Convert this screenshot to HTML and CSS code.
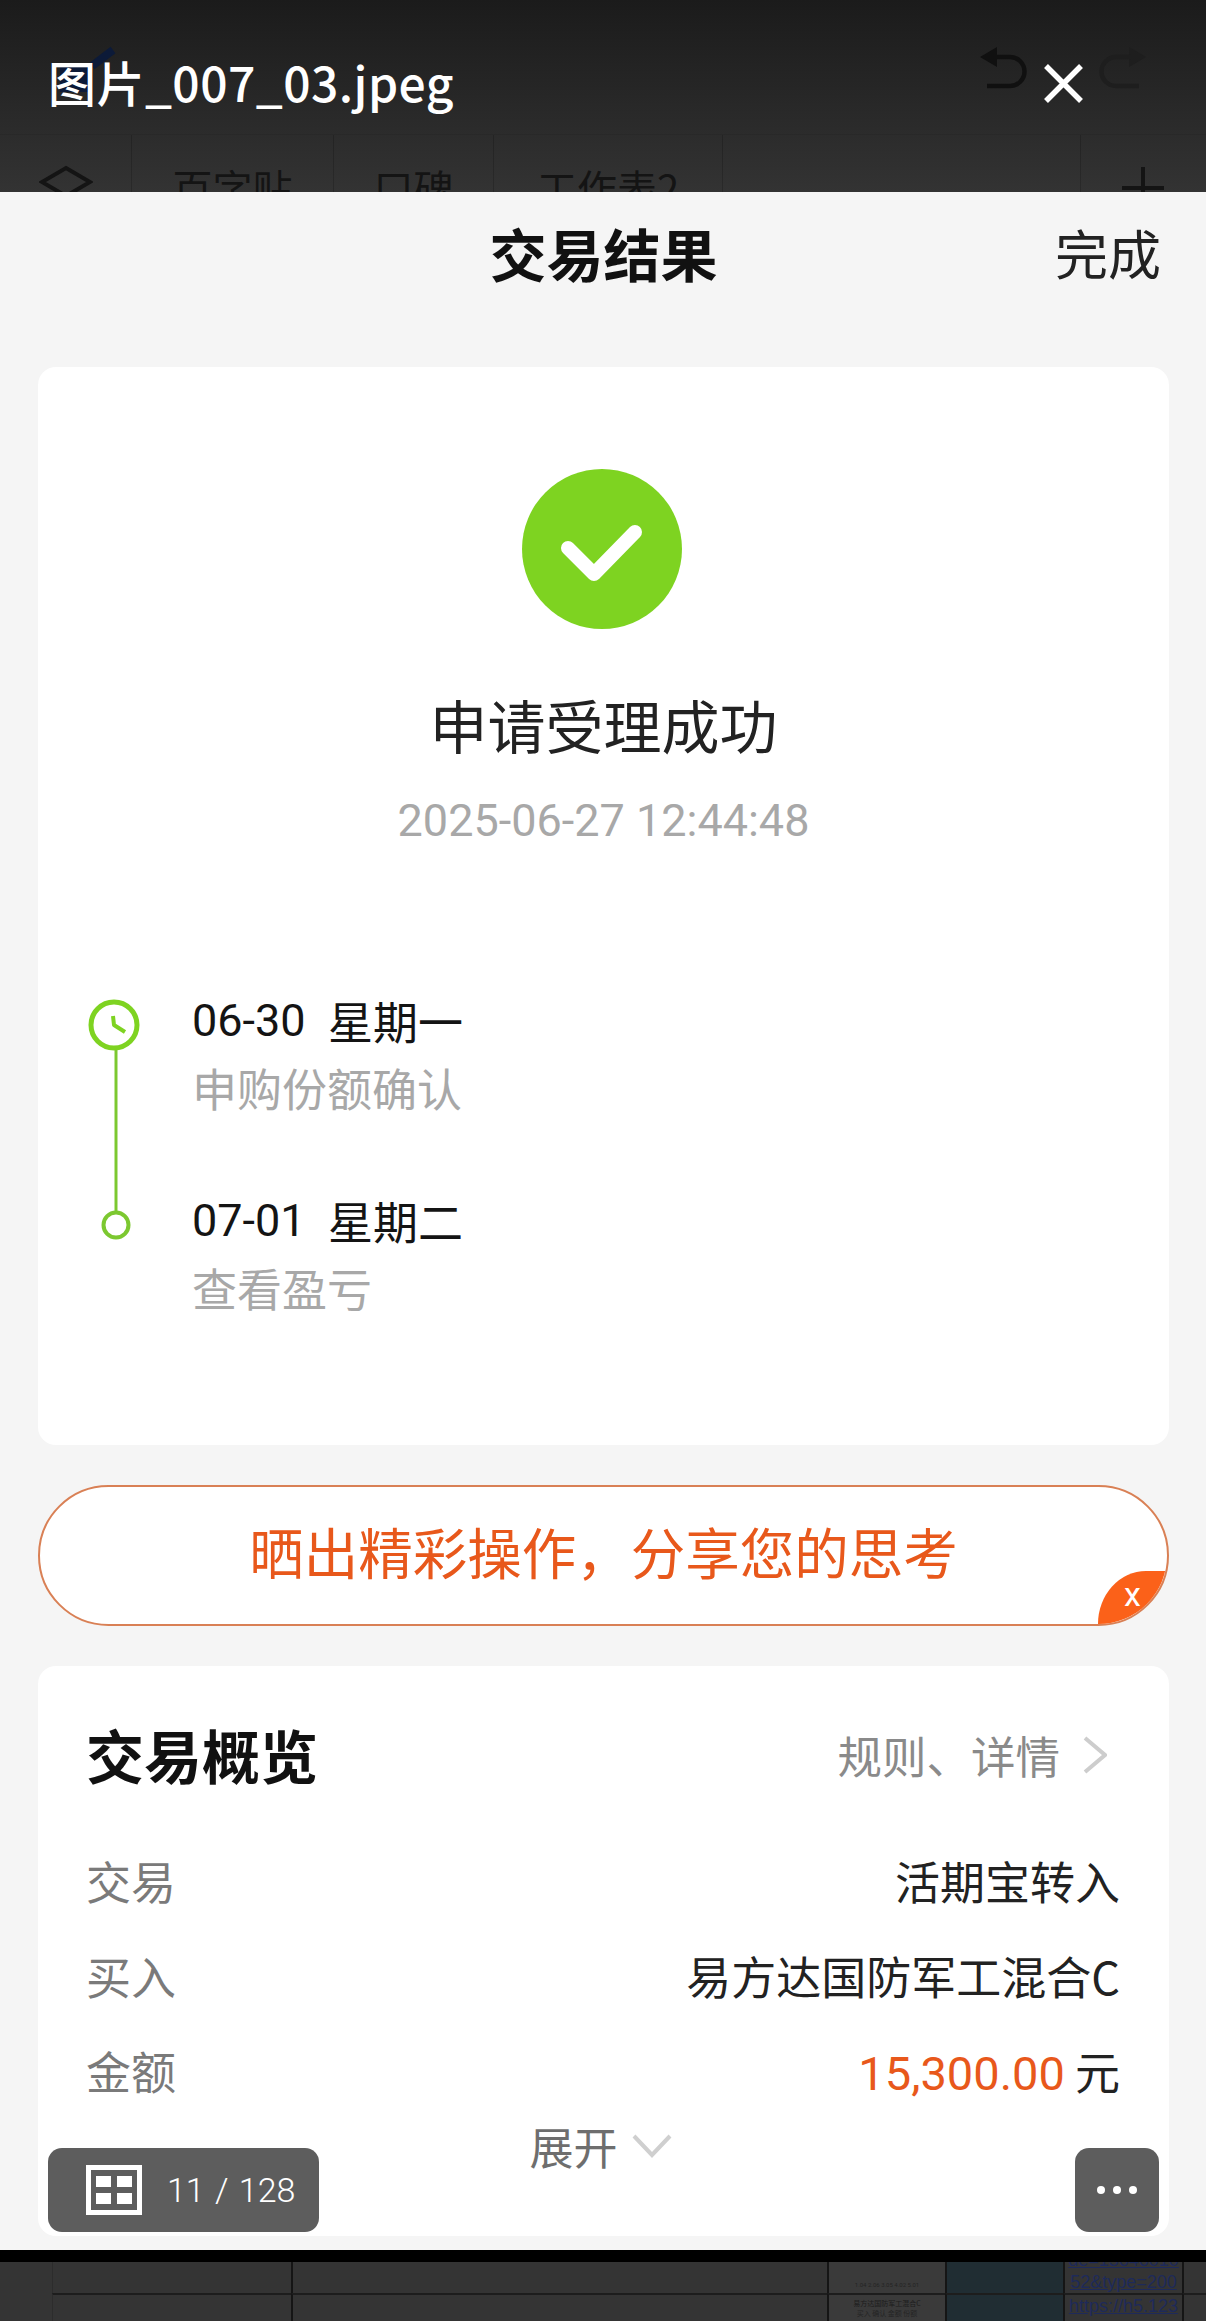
FILE: index.html
```html
<!DOCTYPE html>
<html lang="zh-CN">
<head>
<meta charset="utf-8">
<title>图片_007_03.jpeg</title>
<link rel="stylesheet" href="styles.css">
</head>
<body>
<div class="page">
  <header class="viewer-top">
    <svg class="stray-mark" width="120" height="70" viewBox="0 0 120 70"><path d="M56 36H88V62H56Z" fill="#0c1a38"/><path d="M88 36L109 20" stroke="#0c1a38" stroke-width="8" fill="none"/></svg>
    <div class="title-row">
      <h1 class="file-name">图片_007_03.jpeg</h1>
      <div class="tools">
        <svg class="tool-arrow" width="50" height="45" viewBox="0 0 50 45"><path d="M0 12L17 2V22Z" fill="#101010"/><path d="M15 12H30A14.5 14.5 0 0 1 30 41H7" fill="none" stroke="#101010" stroke-width="4.5"/></svg>
        <svg class="tool-close" width="39" height="39" viewBox="0 0 39 39"><path d="M2 2L37 37M37 2L2 37" stroke="#fff" stroke-width="5.5" fill="none"/></svg>
        <svg class="tool-arrow" width="50" height="45" viewBox="0 0 50 45"><g transform="matrix(-1 0 0 1 49 0)"><path d="M0 12L17 2V22Z" fill="#1e1e1e"/><path d="M15 12H30A14.5 14.5 0 0 1 30 41H7" fill="none" stroke="#1e1e1e" stroke-width="4.5"/></g></svg>
      </div>
    </div>
    <div class="tabs">
      <div class="tab tab-layers"><svg width="54" height="30" viewBox="0 0 54 30"><path d="M27 3L51 17L27 31L3 17Z" fill="none" stroke="#141414" stroke-width="4"/></svg></div>
      <div class="tab tab-a">百字贴</div>
      <div class="tab tab-b">口碑</div>
      <div class="tab tab-c">工作表2</div>
      <div class="tab tab-d"></div>
      <div class="tab tab-plus"><svg width="44" height="26" viewBox="0 0 44 26"><path d="M21 0V26M0 21H42" stroke="#141414" stroke-width="4" fill="none"/></svg></div>
    </div>
  </header>

  <main class="sheet">
    <nav class="nav">
      <span></span>
      <h2 class="nav-title">交易结果</h2>
      <span class="nav-done">完成</span>
    </nav>

    <section class="card result">
      <svg class="check" width="160" height="160" viewBox="0 0 160 160"><circle cx="80" cy="80" r="80" fill="#7ed321"/><path d="M46 79L72 105L113 63" fill="none" stroke="#fff" stroke-width="14" stroke-linecap="round" stroke-linejoin="round"/></svg>
      <div class="result-title">申请受理成功</div>
      <div class="result-time">2025-06-27 12:44:48</div>
      <div class="timeline">
        <svg class="timeline-art" width="60" height="262" viewBox="0 0 60 262">
          <circle cx="34" cy="34" r="23" fill="none" stroke="#7ed321" stroke-width="5"/>
          <path d="M33 25L34 34L45 41" fill="none" stroke="#7ed321" stroke-width="4" stroke-linejoin="round"/>
          <path d="M36 59V220" stroke="#7cc830" stroke-width="3" fill="none"/>
          <circle cx="36" cy="234" r="12.5" fill="#fff" stroke="#7cc830" stroke-width="4"/>
        </svg>
        <div class="steps">
          <div class="step">
            <div class="step-date"><span class="date-num">06-30</span><span class="date-week">星期一</span></div>
            <div class="step-note">申购份额确认</div>
          </div>
          <div class="step">
            <div class="step-date"><span class="date-num">07-01</span><span class="date-week">星期二</span></div>
            <div class="step-note">查看盈亏</div>
          </div>
        </div>
      </div>
    </section>

    <section class="banner">
      <span class="banner-text">晒出精彩操作，分享您的思考</span>
      <span class="banner-close">x</span>
    </section>

    <section class="card overview">
      <div class="overview-head">
        <h3 class="overview-title">交易概览</h3>
        <div class="overview-link">规则、详情<svg class="chev-right" width="24" height="38" viewBox="0 0 24 38"><path d="M2 2L22 19L2 36" fill="none" stroke="#cdcdcd" stroke-width="4"/></svg></div>
      </div>
      <div class="row"><span class="row-label">交易</span><span class="row-value">活期宝转入</span></div>
      <div class="row"><span class="row-label">买入</span><span class="row-value">易方达国防军工混合C</span></div>
      <div class="row"><span class="row-label">金额</span><span class="row-value"><span class="amount">15,300.00</span> 元</span></div>
      <div class="expand">展开<svg class="chev-down" width="40" height="24" viewBox="0 0 40 24"><path d="M2 2L20 21L38 2" fill="none" stroke="#cfcfcf" stroke-width="4"/></svg></div>
    </section>
  </main>

  <div class="black-bar"></div>

  <div class="sheet-table">
    <div class="cell c-edge"></div>
    <div class="cell c-wide"></div>
    <div class="cell c-mid"></div>
    <div class="cell c-thumb"><span class="thumb-foot">1.04 2.06 3.05 4.02 5.01</span></div>
    <div class="cell c-blue"></div>
    <div class="cell c-link"><span class="link">de=13646010</span><span class="link">52&amp;type=200</span></div>
    <div class="cell c-end"></div>
    <div class="cell c-edge"></div>
    <div class="cell c-wide line-top"></div>
    <div class="cell c-mid line-top"></div>
    <div class="cell c-thumb line-top"><span class="thumb-head">易方达国防军工混合C</span><span class="thumb-row">买入 确认 金额 份额</span><span class="thumb-row">1101 1300 1500 1200</span></div>
    <div class="cell c-blue line-top"></div>
    <div class="cell c-link line-top"><span class="link">https://h5.123</span></div>
    <div class="cell c-end line-top"></div>
  </div>

  <div class="float-pager">
    <svg width="56" height="50" viewBox="0 0 56 50"><rect x="2.5" y="2.5" width="51" height="45" fill="none" stroke="#fff" stroke-width="5"/><path d="M10 11H25V22H10ZM31 11H46V22H31ZM10 28H25V39H10ZM31 28H46V39H31Z" fill="#fff"/></svg>
    <span class="pager-text">11 / 128</span>
  </div>
  <div class="float-more"><span class="dot"></span><span class="dot"></span><span class="dot"></span></div>
</div>
</body>
</html>
```

FILE: styles.css
```css
* { box-sizing: border-box; }
html, body { margin: 0; padding: 0; }
body {
  width: 1206px;
  height: 2321px;
  overflow: hidden;
  font-family: "Noto Sans CJK SC", "Roboto", sans-serif;
  background: #333;
}
h1, h2, h3 { margin: 0; font-weight: inherit; font-size: inherit; }
.page { position: relative; width: 1206px; height: 2321px; overflow: hidden; display: flex; flex-direction: column; }

.viewer-top {
  position: relative;
  height: 192px;
  flex: none;
  overflow: hidden;
  background: linear-gradient(#1b1b1b, #333);
}
.stray-mark { position: absolute; left: 4px; top: 30px; }
.title-row { position: relative; height: 134px; display: flex; align-items: flex-start; justify-content: space-between; padding: 45px 59px 0 48px; }
.file-name { font-family: "Noto Sans CJK SC", sans-serif; font-size: 48px; letter-spacing: 0.45px; line-height: 74px; margin-top: -1px; font-weight: 500; color: #fff; white-space: nowrap; }
.tools { display: flex; align-items: flex-start; gap: 14px; }
.tool-close { margin-top: 19px; }

.tabs { display: flex; height: 58px; border-top: 1px solid rgba(0,0,0,.06); }
.tab { flex: none; height: 100%; border-right: 1px solid rgba(0,0,0,.18); color: #141414; font-size: 40px; line-height: 46px; padding-top: 29px; text-align: center; }
.tab-layers { width: 132px; padding-top: 30px; }
.tab-a { width: 202px; }
.tab-b { width: 160px; }
.tab-c { width: 229px; }
.tab-d { width: 358px; }
.tab-plus { width: 125px; border-right: 0; padding-top: 32px; }
.tab svg { display: block; margin: 0 auto; }

.sheet { flex: none; height: 2058px; background: #f5f5f5; padding: 0 37px 0 38px; overflow: hidden; }
.nav { display: grid; grid-template-columns: 1fr auto 1fr; align-items: center; height: 120px; margin-bottom: 55px; }
.nav-title { font-size: 57px; font-weight: 700; color: #111; line-height: 80px; }
.nav-done { font-size: 53px; color: #222; line-height: 80px; text-align: right; margin-right: 8px; }

.card { background: #fff; border-radius: 18px; }
.result { height: 1078px; padding: 102px 0 0; display: flex; flex-direction: column; align-items: center; }
.check { display: block; flex: none; margin-right: 3px; }
.result-title { margin-top: 55px; font-size: 58px; line-height: 80px; color: #222; }
.result-time { margin-top: 29px; font-family: "Roboto", sans-serif; font-size: 45px; line-height: 56px; color: #a8a8a8; }

.timeline { align-self: flex-start; display: flex; gap: 52px; margin: 142px 0 0 42px; }
.timeline-art { display: block; flex: none; }
.steps { display: flex; flex-direction: column; gap: 73px; }
.step { display: flex; flex-direction: column; gap: 7px; }
.step-date { display: flex; align-items: center; height: 60px; color: #141414; font-size: 45px; line-height: 60px; }
.date-num { font-family: "Roboto", sans-serif; font-size: 45px; width: 136px; }
.step-note { font-size: 45px; line-height: 60px; color: #a8a8a8; height: 60px; }

.banner {
  position: relative;
  height: 141px;
  margin-top: 40px;
  background: #fff;
  border: 2px solid #d98055;
  border-radius: 72px;
  overflow: hidden;
  display: flex;
  align-items: center;
  justify-content: center;
  padding-bottom: 9px;
}
.banner-text { font-size: 54.5px; line-height: 70px; color: #e8581b; }
.banner-close {
  position: absolute;
  right: 0;
  bottom: 0;
  width: 69px;
  height: 53px;
  background: #fb6119;
  border-top-left-radius: 48px 53px;
  color: #fff;
  font-family: "Roboto", sans-serif;
  font-size: 34px;
  line-height: 46px;
  text-align: center;
}

.overview { height: 570px; margin-top: 40px; padding: 53px 49px 0 48px; overflow: hidden; }
.overview-head { display: flex; justify-content: space-between; align-items: center; height: 70px; margin-bottom: 44px; }
.overview-title { font-size: 58px; font-weight: 700; line-height: 70px; color: #111; }
.overview-link { display: flex; align-items: center; gap: 23px; font-size: 44.5px; line-height: 60px; color: #8a8a8a; padding: 2px 13px 0 0; }
.chev-right { display: block; }
.row { display: flex; justify-content: space-between; align-items: center; height: 95px; font-size: 45px; }
.row-label { color: #7a7a7a; }
.row-value { color: #222; font-size: 45px; }
.amount { font-family: "Roboto", sans-serif; font-size: 47px; color: #e8581b; }
.expand { display: flex; justify-content: center; align-items: center; gap: 14px; height: 56px; font-size: 44px; color: #6e6e6e; margin-right: 5px; }
.chev-down { display: block; }

.black-bar { flex: none; height: 12px; background: #000; }

.sheet-table {
  flex: 1;
  display: grid;
  grid-template-columns: 52px 239px 536px 118px 118px 119px 24px;
  grid-template-rows: 31px 28px;
  background: #343434;
  overflow: hidden;
}
.cell { position: relative; border-left: 2px solid #151515; overflow: hidden; }
.c-edge { border-left: 0; }
.c-wide { border-left: 1px solid #2c2c2c; }
.line-top { border-top: 2px solid #1d1d1d; }
.c-thumb { background: #3a3a3a; display: flex; flex-direction: column; align-items: center; justify-content: flex-end; }
.c-blue { background: #202d33; }
.c-link { display: flex; flex-direction: column; align-items: center; justify-content: flex-end; background: #343434; }
.line-top.c-link { justify-content: flex-start; }
.link { flex: none; font-family: "Liberation Sans", sans-serif; font-size: 18px; line-height: 22px; color: #1e2a5a; text-decoration: underline; white-space: nowrap; }
.line-top.c-thumb { justify-content: flex-start; padding-top: 3px; }
.thumb-head { font-size: 7px; line-height: 10px; color: #1c1c1c; white-space: nowrap; }
.thumb-row { font-size: 7px; line-height: 11px; color: #242424; white-space: nowrap; }
.thumb-foot { font-family: "Roboto", sans-serif; font-size: 6px; line-height: 8px; color: #242424; margin-bottom: 4px; }

.float-pager {
  position: absolute;
  left: 48px;
  top: 2148px;
  width: 271px;
  height: 84px;
  background: #5d5d5d;
  border-radius: 14px;
  display: flex;
  align-items: center;
  gap: 25px;
  padding: 0 0 1px 38px;
}
.float-pager svg { display: block; flex: none; }
.pager-text { font-family: "Roboto", sans-serif; font-size: 34px; word-spacing: 2px; font-weight: 300; line-height: 44px; color: #fff; white-space: nowrap; }
.float-more {
  position: absolute;
  left: 1075px;
  top: 2148px;
  width: 84px;
  height: 84px;
  background: #5d5d5d;
  border-radius: 14px;
  display: flex;
  align-items: center;
  justify-content: center;
  gap: 8px;
}
.dot { width: 8px; height: 8px; border-radius: 50%; background: #fff; }
```
